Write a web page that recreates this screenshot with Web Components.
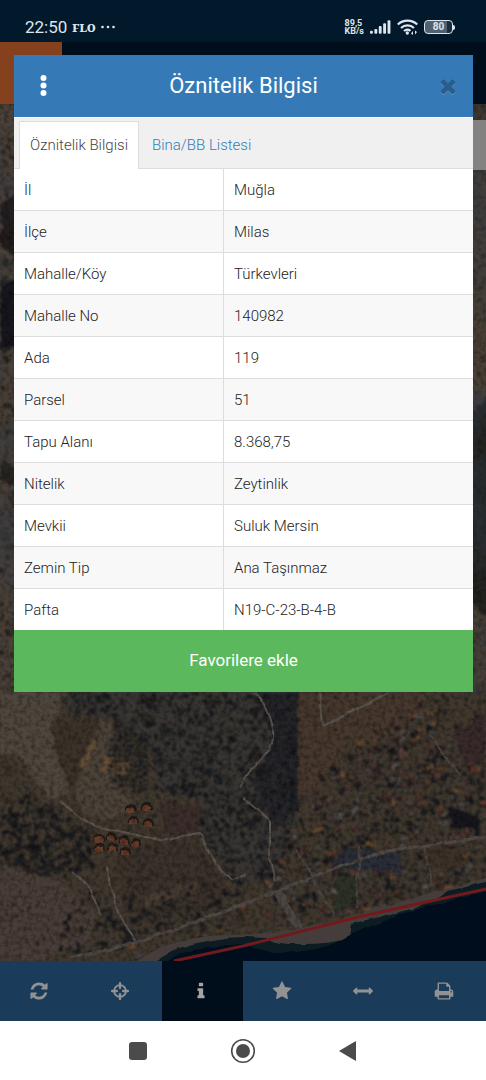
<!DOCTYPE html>
<html lang="tr">
<head>
  <meta charset="utf-8">
  <meta name="viewport" content="width=device-width, initial-scale=1">
  <title>Öznitelik Bilgisi</title>
  <style>
    body {
      margin: 0;
      font-family: Roboto, "Liberation Sans", sans-serif;
      font-size: 15px;
      background: #fff;
    }
  </style>
</head>
<body>
  <parcel-app>
    <status-bar slot="status" time="22:50" carrier="FLO" battery="80"></status-bar>
    <app-header slot="header"></app-header>
    <satellite-map slot="map"></satellite-map>
    <tool-bar slot="tools"></tool-bar>
    <system-nav slot="nav"></system-nav>
    <info-dialog slot="dialog" heading="Öznitelik Bilgisi">
      <tab-list slot="tabs"></tab-list>
      <attribute-table></attribute-table>
      <span slot="action">Favorilere ekle</span>
    </info-dialog>
  </parcel-app>

  <script>
    const ICONS = {
      refresh: `<path d="M1639 1056q0 5-1 7-64 268-268 434.500T892 1664q-146 0-282.500-55T366 1452l-129 129q-19 19-45 19t-45-19-19-45v-448q0-26 19-45t45-19h448q26 0 45 19t19 45-19 45l-137 137q71 66 161 102t187 36q134 0 250-65t186-179q11-17 53-117 8-23 30-23h192q13 0 22.500 9.500t9.500 22.500zm25-800v448q0 26-19 45t-45 19h-448q-26 0-45-19t-19-45 19-45l138-138Q1097 384 896 384q-134 0-250 65T460 628q-11 17-53 117-8 23-30 23H178q-13 0-22.500-9.500T146 736v-7q65-268 270-434.500T896 128q146 0 284 55.500T1425 340l130-129q19-19 45-19t45 19 19 45z"/>`,
      locate: `<g fill="none" stroke="currentColor" stroke-width="170"><circle cx="896" cy="896" r="530"/><path stroke-width="210" stroke-linecap="round" d="M896 190v420M896 1182v420M190 896h420M1182 896h420"/></g>`,
      info: `<path d="M1216 1344v128q0 26-19 45t-45 19H640q-26 0-45-19t-19-45v-128q0-26 19-45t45-19h64V896h-64q-26 0-45-19t-19-45V704q0-26 19-45t45-19h384q26 0 45 19t19 45v576h64q26 0 45 19t19 45zM1088 224v192q0 26-19 45t-45 19H768q-26 0-45-19t-19-45V224q0-26 19-45t45-19h256q26 0 45 19t19 45z"/>`,
      star: `<path d="M1728 647q0 22-26 48l-363 354 86 500q1 7 1 20 0 21-10.500 35.500t-30.500 14.500q-19 0-40-12l-449-236-449 236q-22 12-40 12-21 0-31.500-14.500t-10.500-35.500q0-6 2-20l86-500-364-354q-25-27-25-48 0-37 56-46l502-73 225-455q19-41 49-41t49 41l225 455 502 73q56 9 56 46z"/>`,
      measure: `<path d="M1792 896q0 26-19 45l-256 256q-19 19-45 19t-45-19-19-45v-128H384v128q0 26-19 45t-45 19-45-19L19 941Q0 922 0 896t19-45l256-256q19-19 45-19t45 19 19 45v128h1024V640q0-26 19-45t45-19 45 19l256 256q19 19 19 45z"/>`,
      print: `<path d="M448 1536h896v-256H448v256zm0-640h896V512h-160q-40 0-68-28t-28-68V256H448v640zm1152 64q0-26-19-45t-45-19-45 19-19 45 19 45 45 19 45-19 19-45zm128 0v416q0 13-9.500 22.500t-22.500 9.500h-224v160q0 40-28 68t-68 28H416q-40 0-68-28t-28-68v-160H96q-13 0-22.500-9.500T64 1376V960q0-79 56.500-135.500T256 768h64V224q0-40 28-68t68-28h672q40 0 88 20t76 48l152 152q28 28 48 76t20 88v256h64q79 0 135.500 56.500T1728 960z"/>`,
      close: `<path d="M1490 1322q0 40-28 68l-136 136q-28 28-68 28t-68-28l-294-294-294 294q-28 28-68 28t-68-28l-136-136q-28-28-28-68t28-68l294-294-294-294q-28-28-28-68t28-68l136-136q28-28 68-28t68 28l294 294 294-294q28-28 68-28t68 28l136 136q28 28 28 68t-28 68l-294 294 294 294q28 28 28 68z"/>`,
    };

    const icon = (name) =>
      `<svg viewBox="0 0 1792 1792" fill="currentColor" aria-hidden="true">${ICONS[name]}</svg>`;

    class ParcelApp extends HTMLElement {
      connectedCallback() {
        this.attachShadow({ mode: "open" }).innerHTML = `
          <style>
            :host {
              display: flex;
              flex-direction: column;
              position: relative;
              min-height: 100vh;
            }
            slot[name="map"]::slotted(*) { flex: 1; }
            slot[name="dialog"]::slotted(*) {
              position: absolute;
              top: 55px;
              left: 14px;
              right: 13px;
            }
          </style>
          <slot name="status"></slot>
          <slot name="header"></slot>
          <slot name="map"></slot>
          <slot name="tools"></slot>
          <slot name="nav"></slot>
          <slot name="dialog"></slot>
        `;
      }
    }

    class StatusBar extends HTMLElement {
      connectedCallback() {
        this.attachShadow({ mode: "open" }).innerHTML = `
          <style>
            :host {
              display: flex;
              justify-content: space-between;
              align-items: center;
              height: 30px;
              padding: 12px 31px 0 25px;
              background: #02182b;
              color: #dce6ee;
            }
            .group { display: flex; align-items: center; gap: 5px; height: 30px; }
            .group.right { gap: 6px; }
            .time { font-size: 17px; line-height: 30px; }
            .carrier { font: 900 11px "Noto Serif", "DejaVu Serif", "Liberation Serif", serif; }
            .speed { font-size: 9px; line-height: 8px; font-weight: 700; }
            .speed span { display: block; }
            svg { display: block; fill: currentColor; }
            .battery { display: flex; align-items: center; }
            .cell {
              box-sizing: border-box;
              width: 29px;
              height: 14px;
              border: 1px solid #dce6ee;
              border-radius: 4px;
              background: linear-gradient(90deg, #526171 80%, #182c3e 80%);
              font-size: 10px;
              line-height: 12px;
              font-weight: 700;
              text-align: center;
            }
            .tip { width: 2px; height: 5px; background: #dce6ee; border-radius: 0 2px 2px 0; }
          </style>
          <div class="group">
            <span class="time">${this.getAttribute("time")}</span>
            <span class="carrier">${this.getAttribute("carrier")}</span>
            <svg width="14" height="4" viewBox="0 0 14 4" aria-hidden="true">
              <circle cx="1.500" cy="2" r="1.300"/><circle cx="7" cy="2" r="1.300"/><circle cx="12.500" cy="2" r="1.300"/>
            </svg>
          </div>
          <div class="group right">
            <div class="speed"><span>89,5</span><span>KB/s</span></div>
            <svg width="21" height="14" viewBox="0 0 22 14" aria-hidden="true">
              <rect x="0" y="11" width="3" height="3" rx="1"/>
              <rect x="4.600" y="9" width="3" height="5" rx="1"/>
              <rect x="9.200" y="6" width="3" height="8" rx="1"/>
              <rect x="13.800" y="3" width="3" height="11" rx="1"/>
              <rect x="18.400" y="0" width="3" height="14" rx="1"/>
            </svg>
            <svg width="21" height="16" viewBox="0 0 21 16" aria-hidden="true">
              <g fill="none" stroke="currentColor" stroke-width="2.200">
                <path d="M.8 5.500a14 14 0 0 1 19.400 0M4 9a9.500 9.500 0 0 1 13 0M7 12a5.200 5.200 0 0 1 6.500-.2"/>
              </g>
              <circle cx="10.300" cy="14" r="1.700"/>
              <path d="M14 14.500l2-2.500v4zM20 13l-2 2.500v-4z"/>
            </svg>
            <div class="battery"><div class="cell">${this.getAttribute("battery")}</div><div class="tip"></div></div>
          </div>
        `;
      }
    }

    class AppHeader extends HTMLElement {
      connectedCallback() {
        this.attachShadow({ mode: "open" }).innerHTML = `
          <style>
            :host { display: flex; height: 62px; background: #000d1b; }
            button { width: 62px; border: 0; background: #85401d; }
          </style>
          <button type="button" aria-label="Menü"></button>
        `;
      }
    }

    // Small seeded generator so the terrain is the same on every load
    function seeded(seed) {
      return () => {
        seed = (seed * 1664525 + 1013904223) % 4294967296;
        return seed / 4294967296;
      };
    }

    function inside(x, y, poly) {
      let hit = false;
      for (let i = 0, j = poly.length - 1; i < poly.length; j = i++) {
        const [xi, yi] = poly[i];
        const [xj, yj] = poly[j];
        if (yi > y !== yj > y && x < ((xj - xi) * (y - yi)) / (yj - yi) + xi) hit = !hit;
      }
      return hit;
    }

    class SatelliteMap extends HTMLElement {
      connectedCallback() {
        this.random = seeded(41);
        this.attachShadow({ mode: "open" }).innerHTML = `
          <style>
            :host { display: block; position: relative; min-height: 600px; background: #3a322e; overflow: hidden; }
            svg { position: absolute; inset: 0; width: 100%; height: 100%; }
            button {
              position: absolute;
              top: 16px;
              right: 0;
              width: 50px;
              height: 50px;
              border: 0;
              background: #838281;
            }
          </style>
          <svg viewBox="0 104 486 857" preserveAspectRatio="xMidYMax slice" aria-hidden="true">
            ${this.terrain()}
          </svg>
          <button type="button" aria-label="Katmanlar"></button>
        `;
      }

      // Random points of a polygon, each drawn by the callback
      spread(poly, count, draw) {
        const xs = poly.map((p) => p[0]);
        const ys = poly.map((p) => p[1]);
        const x0 = Math.min(...xs), x1 = Math.max(...xs);
        const y0 = Math.min(...ys), y1 = Math.max(...ys);
        let out = "";
        for (let i = 0; i < count; i++) {
          const x = x0 + this.random() * (x1 - x0);
          const y = y0 + this.random() * (y1 - y0);
          if (inside(x, y, poly)) out += draw(x.toFixed(1), y.toFixed(1));
        }
        return out;
      }

      scatter(poly, count, min, max, colors) {
        return this.spread(poly, count, (x, y) => {
          const r = min + this.random() * (max - min);
          const c = colors[Math.floor(this.random() * colors.length)];
          return `<circle cx="${x}" cy="${y}" r="${r.toFixed(1)}" fill="${c}"/>`;
        });
      }

      houses(poly, count, colors) {
        return this.spread(poly, count, (x, y) => {
          const w = (4 + this.random() * 4).toFixed(1);
          const h = (3 + this.random() * 3).toFixed(1);
          const c = colors[Math.floor(this.random() * colors.length)];
          return `<g transform="translate(${x} ${y}) rotate(-20)"><rect x="-1" y="1" width="${w}" height="${h}" fill="#1c1b1c"/><rect width="${w}" height="${h}" fill="${c}"/></g>`;
        });
      }

      terrain() {
        const shape = (pts, fill) => `<polygon points="${pts.join(" ")}" fill="${fill}"/>`;
        const dark = ["#16191d", "#1b1f21", "#201f1e", "#151a20"];
        const scrub = ["#272522", "#2c2824", "#463b35", "#40372f", "#292a27"];
        const roofs = ["#5c392b", "#50382f", "#573d35", "#47302e", "#58524d", "#4b4642", "#66492f", "#44403c"];

        const all = [[0, 690], [486, 690], [486, 885], [350, 918], [243, 937], [130, 961], [0, 961]];
        const tan = [[0, 692], [64, 692], [52, 730], [72, 790], [50, 800], [20, 756], [0, 752]];
        const brown = [[52, 722], [98, 720], [76, 780], [74, 798], [54, 748]];
        const forest = [[66, 692], [298, 692], [298, 820], [270, 884], [235, 884], [202, 838], [200, 800], [158, 792], [150, 740], [110, 718], [66, 712]];
        const denseForest = [[254, 690], [298, 690], [298, 810], [272, 822], [252, 780], [274, 742]];
        const grove = [[112, 718], [150, 740], [148, 794], [112, 784], [108, 760]];
        const leftWood = [[0, 788], [40, 800], [88, 832], [94, 868], [40, 876], [0, 862]];
        const slope = [[0, 864], [60, 880], [98, 915], [85, 945], [40, 961], [0, 961]];
        const middle = [[118, 850], [190, 838], [222, 876], [226, 900], [150, 925], [122, 900]];
        const field = [[298, 692], [428, 692], [410, 730], [350, 745], [318, 790], [298, 800]];
        const village = [[352, 742], [424, 700], [486, 715], [486, 880], [350, 912], [290, 925], [262, 890], [290, 830], [312, 786]];
        const villageSouth = [[238, 890], [300, 868], [350, 862], [350, 912], [290, 928], [240, 934], [130, 956], [80, 956]];

        let rows = "";
        for (let y = 720; y < 794; y += 5) {
          for (let x = 110; x < 149; x += 5) {
            if (inside(x, y, grove)) {
              rows += `<circle cx="${x + this.random()}" cy="${y + this.random()}" r="2" fill="#171c21"/>`;
            }
          }
        }

        let estate = "";
        for (const [x, y] of [[95, 835], [107, 833], [119, 836], [131, 839], [95, 844], [108, 844], [121, 847], [127, 804], [142, 803], [129, 817], [144, 819]]) {
          estate += `<path d="M${x - 1} ${y + 3}q4-7 10-2l1 6h-11z" fill="#231a18"/><path d="M${x} ${y + 4}q4-4 8 0v4h-8z" fill="#663a2a"/>`;
        }

        return `
          <defs>
            <filter id="rough" x="0" y="0" width="100%" height="100%">
              <feTurbulence type="fractalNoise" baseFrequency="0.12" numOctaves="3" seed="8" result="n"/>
              <feDisplacementMap in="SourceGraphic" in2="n" scale="8" xChannelSelector="R" yChannelSelector="G"/>
              <feGaussianBlur stdDeviation="0.8"/>
            </filter>
            <filter id="wavy" x="0" y="0" width="100%" height="100%">
              <feTurbulence type="fractalNoise" baseFrequency="0.06" numOctaves="2" seed="5" result="n"/>
              <feDisplacementMap in="SourceGraphic" in2="n" scale="5" xChannelSelector="R" yChannelSelector="G"/>
              <feGaussianBlur stdDeviation="0.6"/>
            </filter>
            <filter id="grain" x="0" y="0" width="100%" height="100%">
              <feTurbulence type="fractalNoise" baseFrequency="0.22" numOctaves="4" seed="3"/>
              <feColorMatrix values="0 0 0 0 0  0 0 0 0 0  0 0 0 0 0  1.800 0 0 0 -0.700"/>
            </filter>
            <filter id="patches" x="0" y="0" width="100%" height="100%">
              <feTurbulence type="fractalNoise" baseFrequency="0.02 0.014" numOctaves="3" seed="12"/>
              <feColorMatrix values="0 0 0 0 0.030  0 0 0 0 0.040  0 0 0 0 0.060  3 0 0 0 -1.200"/>
            </filter>
          </defs>
          <rect y="104" width="486" height="857" fill="#40372f"/>
          <g filter="url(#rough)">
            <rect x="-10" y="104" width="40" height="590" fill="#4a4037"/>
            ${this.scatter([[0, 130], [18, 130], [18, 690], [0, 690]], 170, 1, 3, scrub)}
            ${shape([[0, 205], [20, 190], [20, 262], [0, 245]], "#211e1d")}
            ${shape([[0, 284], [20, 278], [20, 345], [0, 350]], "#17191e")}
            ${shape([[0, 458], [20, 470], [20, 490], [0, 480]], "#28231f")}
            <rect x="460" y="170" width="36" height="530" fill="#4a4036"/>
            ${this.scatter([[468, 170], [490, 170], [490, 690], [468, 690]], 120, 1, 2, scrub)}
            ${shape([[470, 415], [490, 395], [490, 620], [470, 600]], "#24231f")}

            <rect x="-10" y="685" width="510" height="290" fill="#40372f"/>
            ${this.scatter(all, 1800, 1, 2.4, scrub)}
            ${shape(tan, "#50463d")}
            ${shape(brown, "#3a302c")}
            ${shape(forest, "#393532")}
            ${this.scatter(forest, 1500, 1.2, 2.4, dark)}
            ${shape(denseForest, "#27282b")}
            ${this.scatter(denseForest, 350, 1, 2.2, dark)}
            ${shape([[104, 718], [112, 726], [116, 790], [138, 800], [110, 822], [84, 812], [74, 790]], "#4c4338")}
            ${shape([[104, 757], [128, 760], [128, 776], [103, 772]], "#664f35")}
            ${shape([[92, 738], [97, 740], [84, 770], [79, 767]], "#604d36")}
            ${rows}
            ${this.scatter(leftWood, 520, 1, 2.8, dark)}
            ${shape(slope, "#493e38")}
            ${this.scatter(slope, 90, 1, 2, scrub)}
            ${shape(middle, "#3a302c")}
            ${this.scatter(middle, 220, 1, 2, scrub)}
            ${shape([[144, 896], [196, 882], [194, 894], [146, 908]], "#4a3e32")}
            ${shape([[162, 802], [202, 806], [198, 832], [164, 836]], "#3b2f2a")}
            ${shape(field, "#46382f")}
            ${this.scatter(field, 70, 1, 2, scrub)}
            ${this.scatter([[66, 900], [240, 880], [240, 930], [60, 958]], 260, 1, 2.8, dark)}
            ${this.scatter(village, 600, 1, 3, dark)}
            ${this.houses(village, 270, roofs)}
            ${this.houses(villageSouth, 60, roofs)}
            ${this.scatter(village, 260, 1, 2.2, dark)}
            ${shape([[452, 734], [486, 716], [486, 760], [466, 764]], "#392b2a")}
            ${shape([[448, 806], [480, 816], [480, 832], [450, 826]], "#15161b")}
            ${shape([[332, 860], [350, 848], [400, 854], [402, 872], [370, 870], [336, 868]], "#2b2e37")}
            ${shape([[422, 846], [460, 846], [460, 866], [430, 870]], "#3d302a")}
            ${shape([[336, 878], [357, 874], [354, 908], [334, 914]], "#2f3027")}
          </g>
          <g filter="url(#wavy)">
            ${estate}
            <g fill="none" stroke="#5b534e" stroke-width="2" stroke-linejoin="round">
              <path d="M60 800q20 22 36 26t64 14q20-4 40-7 16 38 32 46l14-4"/>
              <path d="M108 868l4 24q6 26 24 48"/>
              <path d="M73 872q20 14 29 44"/>
              <path d="M253 692q18 18 20 38t-20 38l-14 20"/>
              <path d="M243 798l27 22v38l6 22"/>
              <path d="M320 692l3 34 70-36"/>
              <path d="M70 958q60-10 173-54t143-53l100-14" stroke-width="3" stroke="#504a45"/>
              <path d="M360 846l-4 62M296 850l38 66M424 846l8 40M430 736l30 40" stroke="#4b4541"/>
            </g>
            <path d="M278 892l22 38" stroke="#4d4542" stroke-width="8"/>
          </g>
          <rect y="104" width="486" height="857" filter="url(#grain)" opacity="0.400"/>
          <rect y="104" width="486" height="590" filter="url(#patches)" opacity="0.500"/>
          <g filter="url(#wavy)">
            <path d="M128 965l34-18q40-14 81-12l60-6 50-14 80-22 63-18v90z" fill="#443e3a"/>
            <path d="M140 970l36-21q36-12 70-12l20 1q10 7 40 6 36-1 44-8l2-12 54-14q30-6 42-19l50-12v91z" fill="#0b1b22"/>
            <path d="M150 970l34-17q30-9 60-8l30 8q50 0 74-17l52-22 100-26v82z" fill="#000b1b"/>
          </g>
          <path d="M174 961l69-15 115-29 128-28" fill="none" stroke="#711a1d" stroke-width="3"/>
        `;
      }
    }

    class ToolBar extends HTMLElement {
      connectedCallback() {
        this.tools = [
          ["refresh", "Yenile"],
          ["locate", "Konum"],
          ["info", "Bilgi"],
          ["star", "Favoriler"],
          ["measure", "Ölçüm"],
          ["print", "Yazdır"],
        ];
        this.attachShadow({ mode: "open" }).innerHTML = `
          <style>
            :host { display: flex; height: 60px; background: #1a3c5a; }
            button {
              display: flex;
              flex: 1;
              align-items: center;
              justify-content: center;
              padding: 0 3px 0 0;
              border: 0;
              background: none;
              color: #929292;
            }
            button.active { background: #000d1b; color: #a4a4a4; }
            svg { width: 20px; height: 20px; }
          </style>
          ${this.tools
            .map(
              ([name, label]) => `
            <button type="button" aria-label="${label}" class="${name === "info" ? "active" : ""}">${icon(name)}</button>
          `
            )
            .join("")}
        `;
        const buttons = this.shadowRoot.querySelectorAll("button");
        buttons.forEach((button) => {
          button.addEventListener("click", () => {
            buttons.forEach((b) => b.classList.toggle("active", b === button));
          });
        });
      }
    }

    class SystemNav extends HTMLElement {
      connectedCallback() {
        this.attachShadow({ mode: "open" }).innerHTML = `
          <style>
            :host {
              display: flex;
              align-items: center;
              justify-content: center;
              gap: 79px;
              height: 59px;
              background: #fff;
            }
            button { padding: 0; border: 0; background: none; }
            svg { display: block; width: 26px; height: 26px; fill: #4b4b4b; }
          </style>
          <button type="button" aria-label="Son uygulamalar">
            <svg viewBox="0 0 26 26"><rect x="4" y="4" width="18" height="18" rx="3"/></svg>
          </button>
          <button type="button" aria-label="Ana ekran">
            <svg viewBox="0 0 26 26"><circle cx="13" cy="13" r="11.300" fill="none" stroke="#4b4b4b" stroke-width="1.600"/><circle cx="13" cy="13" r="7"/></svg>
          </button>
          <button type="button" aria-label="Geri">
            <svg viewBox="0 0 26 26"><path d="M4 13L20 3.400q1-.6 1 .6v18q0 1.200-1 .6z"/></svg>
          </button>
        `;
      }
    }

    class InfoDialog extends HTMLElement {
      connectedCallback() {
        this.attachShadow({ mode: "open" }).innerHTML = `
          <style>
            :host { display: block; background: #fff; }
            header {
              display: flex;
              align-items: center;
              justify-content: space-between;
              height: 62px;
              padding: 0 14px;
              background: #357ab7;
              color: #fff;
            }
            h1 { margin: 0; font-size: 22px; line-height: 30px; font-weight: 400; }
            header button {
              display: flex;
              justify-content: center;
              width: 30px;
              padding: 0;
              border: 0;
              background: none;
              color: #fff;
            }
            header .close { justify-content: flex-end; color: #285d8c; }
            .close svg { width: 22px; height: 22px; filter: drop-shadow(0 1px 0 #5c94c6); }
            .action {
              display: block;
              width: 100%;
              height: 62px;
              padding: 0 0 2px;
              border: 0;
              background: #5cb85c;
              color: #fff;
              font: inherit;
              font-size: 17px;
              font-weight: 400;
            }
          </style>
          <header>
            <button type="button" aria-label="Seçenekler">
              <svg width="7" height="22" viewBox="0 0 7 22" fill="currentColor">
                <circle cx="3.500" cy="3" r="3"/><circle cx="3.500" cy="10.500" r="3"/><circle cx="3.500" cy="18" r="3"/>
              </svg>
            </button>
            <h1>${this.getAttribute("heading")}</h1>
            <button type="button" class="close" aria-label="Kapat">${icon("close")}</button>
          </header>
          <slot name="tabs"></slot>
          <slot></slot>
          <button type="button" class="action"><slot name="action"></slot></button>
        `;
        this.shadowRoot.querySelector(".close").addEventListener("click", () => {
          this.hidden = true;
        });
      }
    }

    class TabList extends HTMLElement {
      connectedCallback() {
        this.tabs = ["Öznitelik Bilgisi", "Bina/BB Listesi"];
        this.attachShadow({ mode: "open" }).innerHTML = `
          <style>
            :host {
              display: flex;
              gap: 2px;
              box-sizing: border-box;
              height: 52px;
              padding: 3px 5px 0;
              background: #f0f0f0;
              border-top: 1px solid #fff;
              border-bottom: 1px solid #ddd;
            }
            button {
              height: 48px;
              padding: 0 10px 2px;
              border: 1px solid transparent;
              border-bottom: 0;
              background: none;
              color: #357ab7;
              font: inherit;
              font-weight: 300;
            }
            button[aria-selected="true"] {
              background: #fff;
              border-color: #ddd;
              color: #444;
            }
          </style>
          ${this.tabs
            .map((tab, i) => `<button type="button" role="tab" aria-selected="${i === 0}">${tab}</button>`)
            .join("")}
        `;
        this.setAttribute("role", "tablist");
      }
    }

    class AttributeTable extends HTMLElement {
      connectedCallback() {
        this.rows = [
          ["İl", "Muğla"],
          ["İlçe", "Milas"],
          ["Mahalle/Köy", "Türkevleri"],
          ["Mahalle No", "140982"],
          ["Ada", "119"],
          ["Parsel", "51"],
          ["Tapu Alanı", "8.368,75"],
          ["Nitelik", "Zeytinlik"],
          ["Mevkii", "Suluk Mersin"],
          ["Zemin Tip", "Ana Taşınmaz"],
          ["Pafta", "N19-C-23-B-4-B"],
        ];
        this.attachShadow({ mode: "open" }).innerHTML = `
          <style>
            :host { display: block; }
            table { width: 100%; border-collapse: separate; border-spacing: 0; table-layout: fixed; }
            th, td {
              box-sizing: border-box;
              height: 42px;
              padding: 0 10px;
              border-bottom: 1px solid #ddd;
              color: #222;
              font-weight: 300;
              text-align: left;
            }
            tr:last-child > * { height: 41px; border-bottom: 0; }
            th { width: 210px; border-right: 1px solid #ddd; }
            tr:nth-child(even) { background: #f9f8f9; }
          </style>
          <table>
            <tbody>
              ${this.rows
                .map(([name, value]) => `<tr><th scope="row">${name}</th><td>${value}</td></tr>`)
                .join("")}
            </tbody>
          </table>
        `;
      }
    }

    customElements.define("parcel-app", ParcelApp);
    customElements.define("status-bar", StatusBar);
    customElements.define("app-header", AppHeader);
    customElements.define("satellite-map", SatelliteMap);
    customElements.define("tool-bar", ToolBar);
    customElements.define("system-nav", SystemNav);
    customElements.define("info-dialog", InfoDialog);
    customElements.define("tab-list", TabList);
    customElements.define("attribute-table", AttributeTable);
  </script>
</body>
</html>
